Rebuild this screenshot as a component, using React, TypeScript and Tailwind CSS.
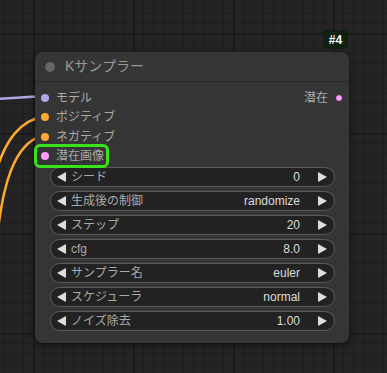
import React from "react";

const font = { fontFamily: '"Liberation Sans", Arial, "Noto Sans CJK JP", sans-serif' };

const slots = [
  { label: "モデル", color: "bg-[#b0a4e3]" },
  { label: "ポジティブ", color: "bg-[#ffa931]" },
  { label: "ネガティブ", color: "bg-[#ffa931]" },
  { label: "潜在画像", color: "bg-[#ff9cf9]" },
];

const widgets = [
  { label: "シード", value: "0" },
  { label: "生成後の制御", value: "randomize" },
  { label: "ステップ", value: "20" },
  { label: "cfg", value: "8.0" },
  { label: "サンプラー名", value: "euler" },
  { label: "スケジューラ", value: "normal" },
  { label: "ノイズ除去", value: "1.00" },
];

function Tri({ dir }: { dir: "l" | "r" }) {
  return (
    <svg width="9" height="10" viewBox="0 0 9 10" className="shrink-0">
      {dir === "l" ? (
        <polygon points="9,0 9,10 0,5" fill="#dddddd" />
      ) : (
        <polygon points="0,0 0,10 9,5" fill="#dddddd" />
      )}
    </svg>
  );
}

export default function App() {
  return (
    <div
      style={font}
      className="relative w-[387px] h-[373px] overflow-hidden bg-[#242424] bg-[linear-gradient(to_right,#1a1a1a_2px,transparent_2px),linear-gradient(to_bottom,#1a1a1a_2px,transparent_2px),linear-gradient(to_right,#1e1e1e_1px,transparent_1px),linear-gradient(to_bottom,#1e1e1e_1px,transparent_1px)] bg-[size:100px_100px,100px_100px,10px_10px,10px_10px] bg-[position:33px_33px,33px_33px,3px_3px,3px_3px]"
    >
      {/* wires */}
      <svg className="absolute left-0 top-0" width="387" height="373">
        <path d="M -5 99 L 45 96" stroke="#b0a4e3" strokeWidth="2.5" fill="none" />
        <path d="M 45 116 C 20 120, 5 140, -5 175" stroke="#ffa931" strokeWidth="2.5" fill="none" />
        <path d="M 45 135 C 20 140, 5 170, -2 230" stroke="#ffa931" strokeWidth="2.5" fill="none" />
      </svg>

      {/* badge */}
      <div className="absolute left-[323px] top-[30px] w-[25px] h-[19px] rounded-[5px] bg-[#0f1f10] flex items-center justify-center text-white text-[12px] font-bold">
        #4
      </div>

      {/* node */}
      <div className="absolute left-[35px] top-[52px] w-[314px] h-[291px] rounded-[8px] bg-[#353535] shadow-[0_2px_6px_rgba(0,0,0,0.5)] flex flex-col">
        <div className="h-[30px] flex items-center pl-[10px] border-b border-[#2b2b2b] shrink-0">
          <div className="w-[10px] h-[10px] rounded-full bg-[#666666]" />
          <span className="ml-[10px] text-[14px] text-[#999999]">Kサンプラー</span>
        </div>
        <div className="relative pt-[6px]">
          {slots.map((s) => (
            <div key={s.label} className="h-[19.5px] flex items-center pl-[6px]">
              <div className={`w-[8px] h-[8px] rounded-full ${s.color}`} />
              <span className="ml-[7px] text-[12px] text-[#aaaaaa]">{s.label}</span>
            </div>
          ))}
          <div className="absolute right-[6px] top-[6px] h-[19.5px] flex items-center">
            <span className="mr-[7px] text-[12px] text-[#aaaaaa]">潜在</span>
            <div className="w-[8px] h-[8px] rounded-full bg-[#ff9cf9] border border-[#2a2a2a]" />
          </div>
        </div>
        <div className="flex flex-col gap-[4px] mt-[1px] pl-[15px] pr-[14px]">
          {widgets.map((w) => (
            <div
              key={w.label}
              className="h-[20px] rounded-full bg-[#222222] border border-[#5a5a5a] flex items-center pl-[6px] pr-[7px] text-[12px]"
            >
              <Tri dir="l" />
              <span className="ml-[5px] text-[#aaaaaa] flex-1">{w.label}</span>
              <span className="text-[#dddddd] mr-[18px]">{w.value}</span>
              <Tri dir="r" />
            </div>
          ))}
        </div>
      </div>

      {/* highlight */}
      <div className="absolute left-[34px] top-[144px] w-[75px] h-[24px] rounded-[6px] border-[3px] border-[#3ae21c]" />
    </div>
  );
}
